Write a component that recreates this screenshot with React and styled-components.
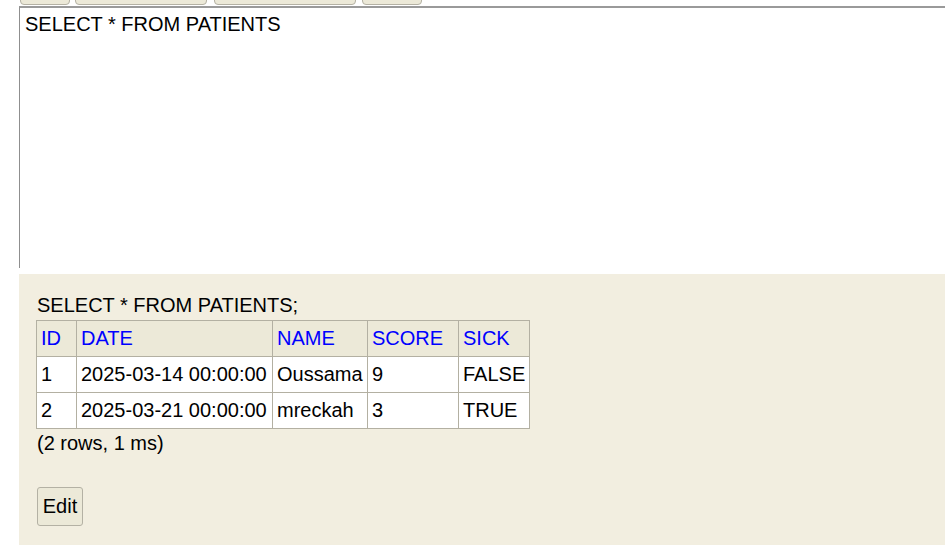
import React from "react";
import styled, { createGlobalStyle } from "styled-components";

const Global = createGlobalStyle`
  html, body { margin: 0; padding: 0; background: #fff; }
  body { font-family: "Liberation Sans", Arial, sans-serif; font-size: 20px; color: #000; overflow: hidden; }
`;

const Page = styled.div`
  padding-left: 19px;
  width: 926px;
  height: 545px;
  display: flex;
  flex-direction: column;
`;

const Toolbar = styled.div`
  display: flex;
  align-items: flex-end;
  height: 6px;
  overflow: hidden;
  padding-left: 1px;
`;

const ToolButton = styled.div`
  flex: none;
  width: ${(p) => p.$w}px;
  margin-right: ${(p) => p.$gap}px;
  height: 30px;
  margin-bottom: 1px;
  box-sizing: border-box;
  background: #ece9d8;
  border: 1px solid #b4b1a4;
  border-radius: 4px;
`;

const QueryBox = styled.div`
  box-sizing: border-box;
  height: 262px;
  border-left: 1px solid #8f8f8f;
  border-top: 2px solid #9a9a9a;
  padding: 5px 5px;
  font-size: 20px;
  line-height: 23px;
  white-space: pre;
  background: #fff;
`;

const Result = styled.div`
  margin-top: 6px;
  flex: 1;
  background: #f2eee0;
  padding: 20px 18px 0 18px;
  line-height: 23px;
`;

const Statement = styled.div`
  margin-bottom: 3px;
`;

const Grid = styled.table`
  border-collapse: collapse;
  table-layout: fixed;
  margin-left: -1px;
`;

const Head = styled.th`
  background: #ece9d8;
  color: #0000ff;
  font-weight: normal;
  text-align: left;
  border: 1px solid #b3b0a2;
  padding: 6px 4px;
  height: 23px;
  width: ${(p) => p.$w - 9}px;
  white-space: nowrap;
`;

const Cell = styled.td`
  background: #fff;
  border: 1px solid #b3b0a2;
  padding: 6px 4px;
  height: 23px;
  white-space: nowrap;
`;

const Summary = styled.div`
  margin-top: 3px;
`;

const EditButton = styled.button`
  margin-top: 32px;
  width: 46px;
  height: 39px;
  box-sizing: border-box;
  background: #ece9d8;
  border: 1px solid #b4b1a4;
  border-radius: 3px;
  font-family: "Liberation Sans", Arial, sans-serif;
  font-size: 20px;
  color: #000;
  padding: 0;
`;

const cols = [
  { name: "ID", w: 40 },
  { name: "DATE", w: 196 },
  { name: "NAME", w: 95 },
  { name: "SCORE", w: 91 },
  { name: "SICK", w: 71 },
];

const rows = [
  ["1", "2025-03-14 00:00:00", "Oussama", "9", "FALSE"],
  ["2", "2025-03-21 00:00:00", "mreckah", "3", "TRUE"],
];

export default function App() {
  return (
    <>
      <Global />
      <Page>
        <Toolbar>
          <ToolButton $w={50} $gap={5} />
          <ToolButton $w={132} $gap={7} />
          <ToolButton $w={142} $gap={6} />
          <ToolButton $w={60} $gap={0} />
        </Toolbar>
        <QueryBox>SELECT * FROM PATIENTS</QueryBox>
        <Result>
          <Statement>SELECT * FROM PATIENTS;</Statement>
          <Grid>
            <thead>
              <tr>
                {cols.map((c) => (
                  <Head key={c.name} $w={c.w}>{c.name}</Head>
                ))}
              </tr>
            </thead>
            <tbody>
              {rows.map((r) => (
                <tr key={r[0]}>
                  {r.map((v, i) => (
                    <Cell key={i}>{v}</Cell>
                  ))}
                </tr>
              ))}
            </tbody>
          </Grid>
          <Summary>(2 rows, 1 ms)</Summary>
          <EditButton>Edit</EditButton>
        </Result>
      </Page>
    </>
  );
}
